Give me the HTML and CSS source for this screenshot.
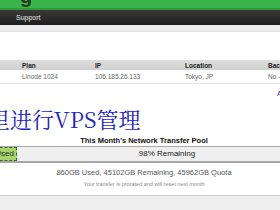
FILE: index.html
```html
<!DOCTYPE html>
<html lang="zh-CN">
<head>
  <meta charset="UTF-8">
  <title>Linode Manager</title>
  <link rel="stylesheet" href="styles.css">
</head>
<body>
  <div class="topbar">
    <span class="logo">g</span>
  </div>
  <div class="nav">
    <span class="nav-item">Support</span>
  </div>
  <div class="subnav"></div>

  <div class="content">
    <div class="linodes">
      <div class="row head">
        <span>Plan</span>
        <span>IP</span>
        <span>Location</span>
        <span>Backups</span>
      </div>
      <div class="row">
        <span>Linode 1024</span>
        <span>106.185.26.133</span>
        <span>Tokyo, JP</span>
        <span>No - Enable</span>
      </div>
    </div>

    <div class="links">
      <a href="#">Add a Linode</a>
    </div>

    <h2 class="caption">里进行VPS管理</h2>

    <div class="transfer">
      <div class="transfer-title">This Month's Network Transfer Pool</div>
      <div class="transfer-bar">
        <div class="used">Used</div>
        <div class="remaining">98% Remaining</div>
      </div>
      <div class="transfer-info">
        <div class="totals">860GB Used, 45102GB Remaining, 45962GB Quota</div>
        <div class="note">Your transfer is prorated and will reset next month</div>
      </div>
    </div>
  </div>
  <div class="footer"></div>
</body>
</html>
```

FILE: styles.css
```css
body {
  margin: 0;
  width: 280px;
  height: 210px;
  overflow: hidden;
  font-family: "Liberation Sans", Arial, sans-serif;
  background-color: #ffffff;
}

.topbar {
  height: 8px;
  background-color: #3bb54a;
  border-bottom: 2px solid #2f9a3c;
  overflow: hidden;
  padding-left: 20px;
}

.logo {
  display: block;
  font-size: 20px;
  font-weight: bold;
  line-height: 10px;
  margin-top: -9px;
  color: #1f3a1f;
}

.nav {
  height: 15px;
  background: linear-gradient(#3a3a3a, #1e1e1e);
  padding-left: 16px;
  display: flex;
  align-items: center;
}

.nav-item {
  font-size: 7px;
  color: #e8e8e8;
}

.subnav {
  height: 6px;
  background-color: #ececec;
  border-bottom: 1px solid #e2e2e2;
}

.content {
  padding-top: 28px;
}

.linodes {
  width: 320px;
}

.row {
  display: grid;
  grid-template-columns: 73px 90px 83px 1fr;
  padding-left: 22px;
  height: 13px;
  align-items: center;
  font-size: 6.5px;
  color: #666666;
  border-bottom: 1px solid #e4e4e4;
  white-space: nowrap;
}

.row.head {
  height: 10px;
  background: linear-gradient(#dedede, #cfcfcf);
  font-weight: bold;
  color: #222222;
  border-bottom: none;
}

.links {
  height: 18px;
  padding-left: 277px;
  display: flex;
  align-items: center;
  white-space: nowrap;
}

.links a {
  font-size: 7px;
  color: #2a2ab8;
  text-decoration: none;
}

.caption {
  margin: 0 0 0 -12px;
  height: 33px;
  font-family: "Noto Serif CJK SC", "Liberation Serif", "Noto Sans CJK SC", serif;
  font-weight: normal;
  font-size: 22px;
  line-height: 34px;
  color: #2222cc;
  white-space: nowrap;
}

.transfer {
  margin-left: -30px;
  width: 348px;
}

.transfer-title {
  text-align: center;
  font-size: 7.5px;
  font-weight: bold;
  color: #111111;
  height: 11px;
  line-height: 11px;
}

.transfer-bar {
  display: flex;
  height: 14px;
  border: 1px solid #a8a8a8;
  border-bottom-width: 2px;
  background-color: #efefef;
}

.used {
  width: 46px;
  box-sizing: border-box;
  background-color: #a6d36e;
  border: 1px dashed #3c6a22;
  font-size: 8px;
  line-height: 12px;
  text-align: right;
  padding-right: 2px;
  color: #1d3010;
}

.remaining {
  flex: 1;
  text-align: center;
  font-size: 8px;
  line-height: 14px;
  color: #222222;
}

.transfer-info {
  height: 33px;
  border: 1px solid #cccccc;
  border-top: none;
  text-align: center;
  padding-top: 5px;
  box-sizing: border-box;
}

.totals {
  font-size: 7.5px;
  color: #555555;
  line-height: 10px;
}

.note {
  font-size: 5.5px;
  color: #8a8a8a;
  margin-top: 3px;
}

.footer {
  height: 20px;
  background-color: #eeeeee;
}
```
